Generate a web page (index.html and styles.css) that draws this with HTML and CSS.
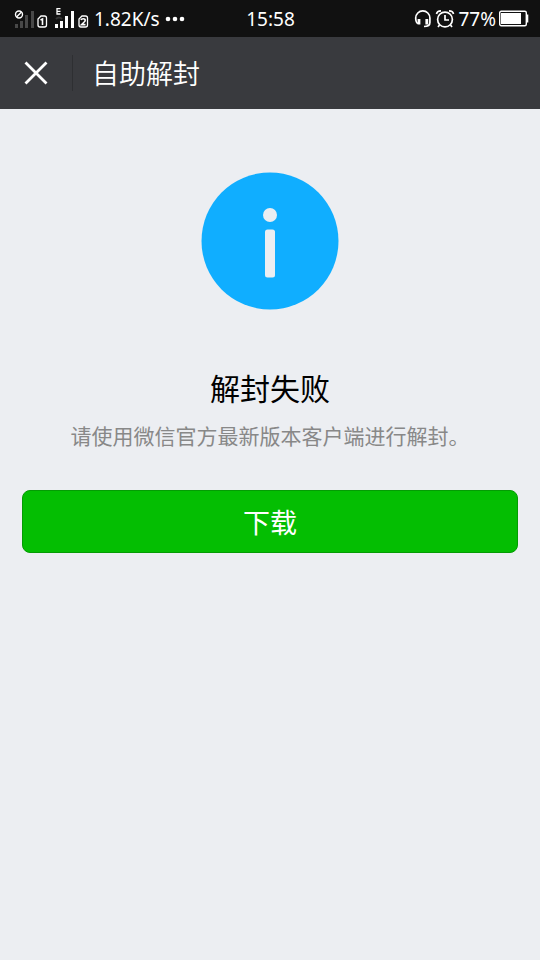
FILE: index.html
```html
<!DOCTYPE html>
<html lang="zh-CN">
<head>
<meta charset="utf-8">
<meta name="viewport" content="width=device-width, initial-scale=1">
<title>自助解封</title>
<link rel="stylesheet" href="styles.css">
</head>
<body>
<div class="status">
  <div class="status-left">
    <svg class="signal" width="36" height="22" viewBox="0 0 36 22" aria-hidden="true">
      <g fill="#484848"><rect x="3" y="16" width="3" height="4"/><rect x="8" y="13" width="3" height="7"/><rect x="13" y="7" width="3" height="13"/><rect x="19" y="3" width="3" height="17"/></g>
      <circle cx="7" cy="6.500" r="3.500" fill="#111" stroke="#fff" stroke-width="1.400"/><path d="M4.500 9l5-5" stroke="#fff" stroke-width="1.400"/>
      <path d="M29 8h3.500q2 0 2 2v7q0 2-2 2h-4.500q-2 0-2-2v-6z" fill="none" stroke="#fff" stroke-width="1.300"/>
      <path d="M28.500 12l2-1v6" fill="none" stroke="#fff" stroke-width="1.600"/>
    </svg>
    <svg class="signal" width="36" height="22" viewBox="0 0 36 22" aria-hidden="true">
      <path d="M7.500 .7H4v5.300H7.500M4 3.400H7.500" fill="none" stroke="#fff" stroke-width="1.300"/>
      <path d="M3 11q3-3 6 0" fill="none" stroke="#333" stroke-width="2"/>
      <g fill="#fff"><rect x="2" y="16" width="3" height="4"/><rect x="7" y="13" width="3" height="7"/><rect x="12" y="8" width="3" height="12"/><rect x="18" y="3" width="3" height="17"/></g>
      <path d="M29 8h3.500q2 0 2 2v7q0 2-2 2h-4.500q-2 0-2-2v-6z" fill="none" stroke="#fff" stroke-width="1.300"/>
      <path d="M28 12q.3-1.300 2.200-1.300 2 0 2 1.600 0 1-1.500 2.200l-2.200 2.100h4" fill="none" stroke="#fff" stroke-width="1.600"/>
    </svg>
    <span>1.82K/s</span>
    <svg class="dots" width="20" height="6" viewBox="0 0 20 6" fill="#fff" aria-hidden="true"><circle cx="3" cy="3" r="2.300"/><circle cx="10" cy="3" r="2.300"/><circle cx="17" cy="3" r="2.300"/></svg>
  </div>
  <span>15:58</span>
  <div class="status-right">
    <svg width="18" height="20" viewBox="0 0 18 20" fill="none" stroke="#fff" aria-hidden="true">
      <path d="M4 14.500Q1.700 13.500 1.700 9a7 7 0 0 1 14.200 0v4.500q0 4-5.900 4" stroke-width="1.700"/>
      <path d="M5 10v5.500M12.800 10v5.500" stroke-width="2.800"/>
    </svg>
    <svg width="20" height="20" viewBox="0 0 20 20" fill="none" stroke="#fff" stroke-width="1.700" aria-hidden="true">
      <circle cx="10" cy="10.500" r="7.400"/><path d="M10 6v5h4M1.500 5Q2 1.800 6 1.800M18.500 5Q18 1.800 14 1.800M4.500 16l-1.500 2M15.500 16l1.500 2"/>
    </svg>
    <span>77%</span>
    <svg class="battery" width="30" height="18" viewBox="0 0 30 18" aria-hidden="true">
      <rect x=".7" y="1.200" width="26.600" height="14.600" rx="1.500" fill="none" stroke="#fff" stroke-width="1.400"/><rect x="2" y="3" width="20" height="11" fill="#fff"/><path d="M28.500 4.500v8" stroke="#fff" stroke-width="1.600"/>
    </svg>
  </div>
</div>
<header class="bar">
  <button class="close" type="button" aria-label="关闭">
    <svg width="24" height="24" viewBox="0 0 24 24" stroke="#fff" stroke-width="2.800" aria-hidden="true"><path d="M1.500 1.500l21 21M22.500 1.500l-21 21"/></svg>
  </button>
  <h1 class="bar-title">自助解封</h1>
</header>
<main class="content">
  <svg class="info" width="138" height="138" viewBox="0 0 138 138" aria-hidden="true">
    <circle cx="69" cy="69" r="68.500" fill="#10aeff"/>
    <g fill="#eceef2"><circle cx="69" cy="43" r="7"/><rect x="64" y="57.500" width="10" height="48" rx="2.500"/></g>
  </svg>
  <h2 class="heading">解封失败</h2>
  <p class="message">请使用微信官方最新版本客户端进行解封。</p>
  <button class="download" type="button">下载</button>
</main>
</body>
</html>
```
FILE: styles.css
```css
* {
  box-sizing: border-box;
}

body {
  margin: 0;
  min-height: 100vh;
  background: #eceef2;
  color: #000;
  font-family: "Noto Sans", "Noto Sans CJK SC", sans-serif;
}

.status {
  display: grid;
  grid-template-columns: 1fr auto 1fr;
  align-items: center;
  height: 37px;
  padding: 0 11px 0 12px;
  background: #111;
  color: #fff;
  font-size: 19px;
  line-height: 38px;
}

.status-left,
.status-right {
  display: flex;
  align-items: center;
}

.status-left {
  gap: 5px;
}

.status-right {
  justify-content: flex-end;
  gap: 3px;
}

.bar {
  display: flex;
  align-items: center;
  height: 72px;
  background: #393a3e;
  color: #fff;
}

.close {
  display: flex;
  align-items: center;
  justify-content: center;
  width: 73px;
  height: 36px;
  padding: 0;
  border: 0;
  border-right: 1px solid #2e2f32;
  background: none;
}

.bar-title {
  margin: 0 0 0 19px;
  font-family: "Noto Sans CJK SC", sans-serif;
  font-size: 27px;
  font-weight: 350;
  line-height: 38px;
}

.content {
  display: flex;
  flex-direction: column;
  align-items: center;
  padding: 63px 22px;
  font-family: "Noto Sans CJK SC", sans-serif;
}

.heading {
  margin: 55px 0 0;
  font-size: 30px;
  font-weight: 400;
  line-height: 44px;
}

.message {
  margin: 10px 0 0;
  color: #888;
  font-size: 21px;
  line-height: 32px;
}

.download {
  width: 100%;
  height: 63px;
  margin-top: 39px;
  padding: 0;
  border: 1px solid #049c04;
  border-radius: 8px;
  background: #04be02;
  color: #fff;
  font-family: inherit;
  font-size: 27px;
  line-height: 40px;
}
```
